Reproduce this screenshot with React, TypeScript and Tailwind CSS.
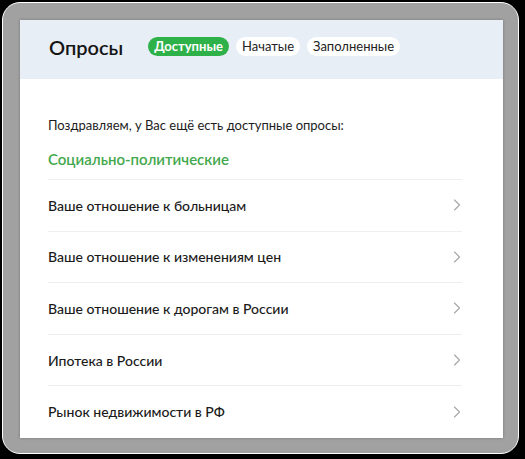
import { ChevronRight } from 'lucide-react';

const tabs = [
  { label: 'Доступные', active: true },
  { label: 'Начатые', active: false },
  { label: 'Заполненные', active: false },
];

const surveys = [
  'Ваше отношение к больницам',
  'Ваше отношение к изменениям цен',
  'Ваше отношение к дорогам в России',
  'Ипотека в России',
  'Рынок недвижимости в РФ',
];

export default function App() {
  return (
    <div className="h-[459px] w-[525px] overflow-hidden bg-black pl-[2px] pt-[2px] font-['Lato',sans-serif]">
      <div className="h-[452px] w-[517px] rounded-[18px] border border-white bg-[#a1a1a1] pl-[17px] pt-[17px]">
        <div className="h-[418px] w-[483px] overflow-hidden bg-white shadow-[0_0_3px_rgba(0,0,0,0.25)]">
          <div className="flex h-[59px] items-center bg-[#e7eef6] px-[29px] pb-[6px]">
            <h1 className="text-[20px] font-semibold leading-none text-[#151515]">Опросы</h1>
            <div className="ml-[25px] flex items-center gap-[7px]">
              {tabs.map((tab) => (
                <span
                  key={tab.label}
                  className={
                    tab.active
                      ? 'flex h-[19px] items-center rounded-full bg-[#2fb14a] px-[6px] text-[13px] font-bold text-white'
                      : 'flex h-[19px] items-center rounded-full bg-white px-[6px] text-[13px] text-[#222]'
                  }
                >
                  {tab.label}
                </span>
              ))}
            </div>
          </div>
          <div className="pl-[28px] pr-[41px] pt-[37px]">
            <p className="text-[13px] leading-[18px] text-[#1d1d1d]">Поздравляем, у Вас ещё есть доступные опросы:</p>
            <h2 className="mt-[15px] text-[15px] font-semibold leading-[20px] text-[#42a84c]">Социально-политические</h2>
            <ul className="mt-[10px]">
              {surveys.map((title) => (
                <li
                  key={title}
                  className="flex h-[51.6px] items-center justify-between border-t border-[#eeeeee]"
                >
                  <span className="text-[14px] font-medium text-[#1a1a1a]">{title}</span>
                  <ChevronRight className="mr-[-5px] h-[20px] w-[20px] text-[#a8a8a8]" strokeWidth={1.4} />
                </li>
              ))}
            </ul>
          </div>
        </div>
      </div>
    </div>
  );
}
